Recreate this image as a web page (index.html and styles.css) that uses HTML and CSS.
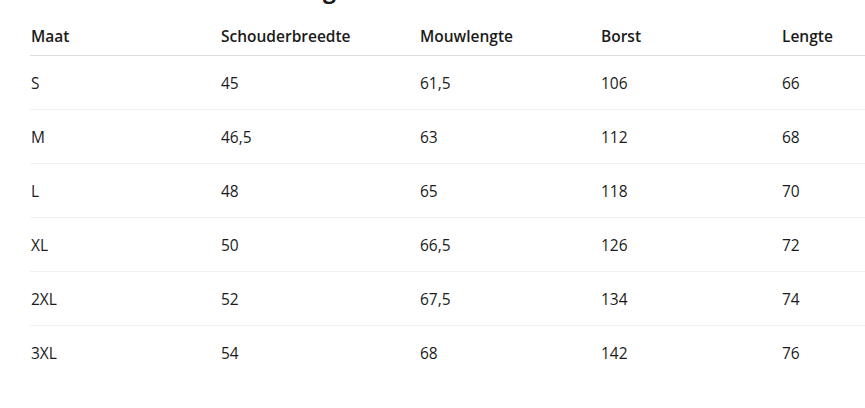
FILE: index.html
```html
<!DOCTYPE html>
<html lang="nl">
<head>
<meta charset="utf-8">
<link rel="stylesheet" href="styles.css">
</head>
<body>
<section class="sizes">
  <h2 class="title">Maattabel en maatvoering</h2>
  <table class="size-table">
    <colgroup>
      <col class="c1"><col class="c2"><col class="c3"><col class="c4"><col class="c5">
    </colgroup>
    <thead>
      <tr><th>Maat</th><th>Schouderbreedte</th><th>Mouwlengte</th><th>Borst</th><th>Lengte</th></tr>
    </thead>
    <tbody>
      <tr><td>S</td><td>45</td><td>61,5</td><td>106</td><td>66</td></tr>
      <tr><td>M</td><td>46,5</td><td>63</td><td>112</td><td>68</td></tr>
      <tr><td>L</td><td>48</td><td>65</td><td>118</td><td>70</td></tr>
      <tr><td>XL</td><td>50</td><td>66,5</td><td>126</td><td>72</td></tr>
      <tr><td>2XL</td><td>52</td><td>67,5</td><td>134</td><td>74</td></tr>
      <tr><td>3XL</td><td>54</td><td>68</td><td>142</td><td>76</td></tr>
    </tbody>
  </table>
</section>
</body>
</html>
```
FILE: styles.css
```css
html, body {
  margin: 0;
  padding: 0;
  background: #fff;
}
body {
  font-family: "Open Sans", "Noto Sans", sans-serif;
  color: #1b1b1b;
  overflow: hidden;
}
.sizes {
  padding-left: 30px;
}
.title {
  margin: -26px 0 0 0;
  font-size: 23px;
  line-height: 30px;
  font-weight: 700;
}
.size-table {
  width: 100%;
  border-collapse: collapse;
  margin-top: 13px;
  font-size: 15.5px;
}
.c1 { width: 190px; }
.c2 { width: 199px; }
.c3 { width: 181px; }
.c4 { width: 181px; }
.size-table th {
  text-align: left;
  font-weight: 600;
  padding: 9px 0 9px 1px;
  line-height: 20px;
  border-bottom: 1px solid #dcdcdc;
}
.size-table td {
  padding: 0 0 0 1px;
  height: 53px;
  line-height: 20px;
  border-bottom: 1px solid #f0f0f0;
}
.size-table tbody tr:last-child td {
  border-bottom: none;
}
```
